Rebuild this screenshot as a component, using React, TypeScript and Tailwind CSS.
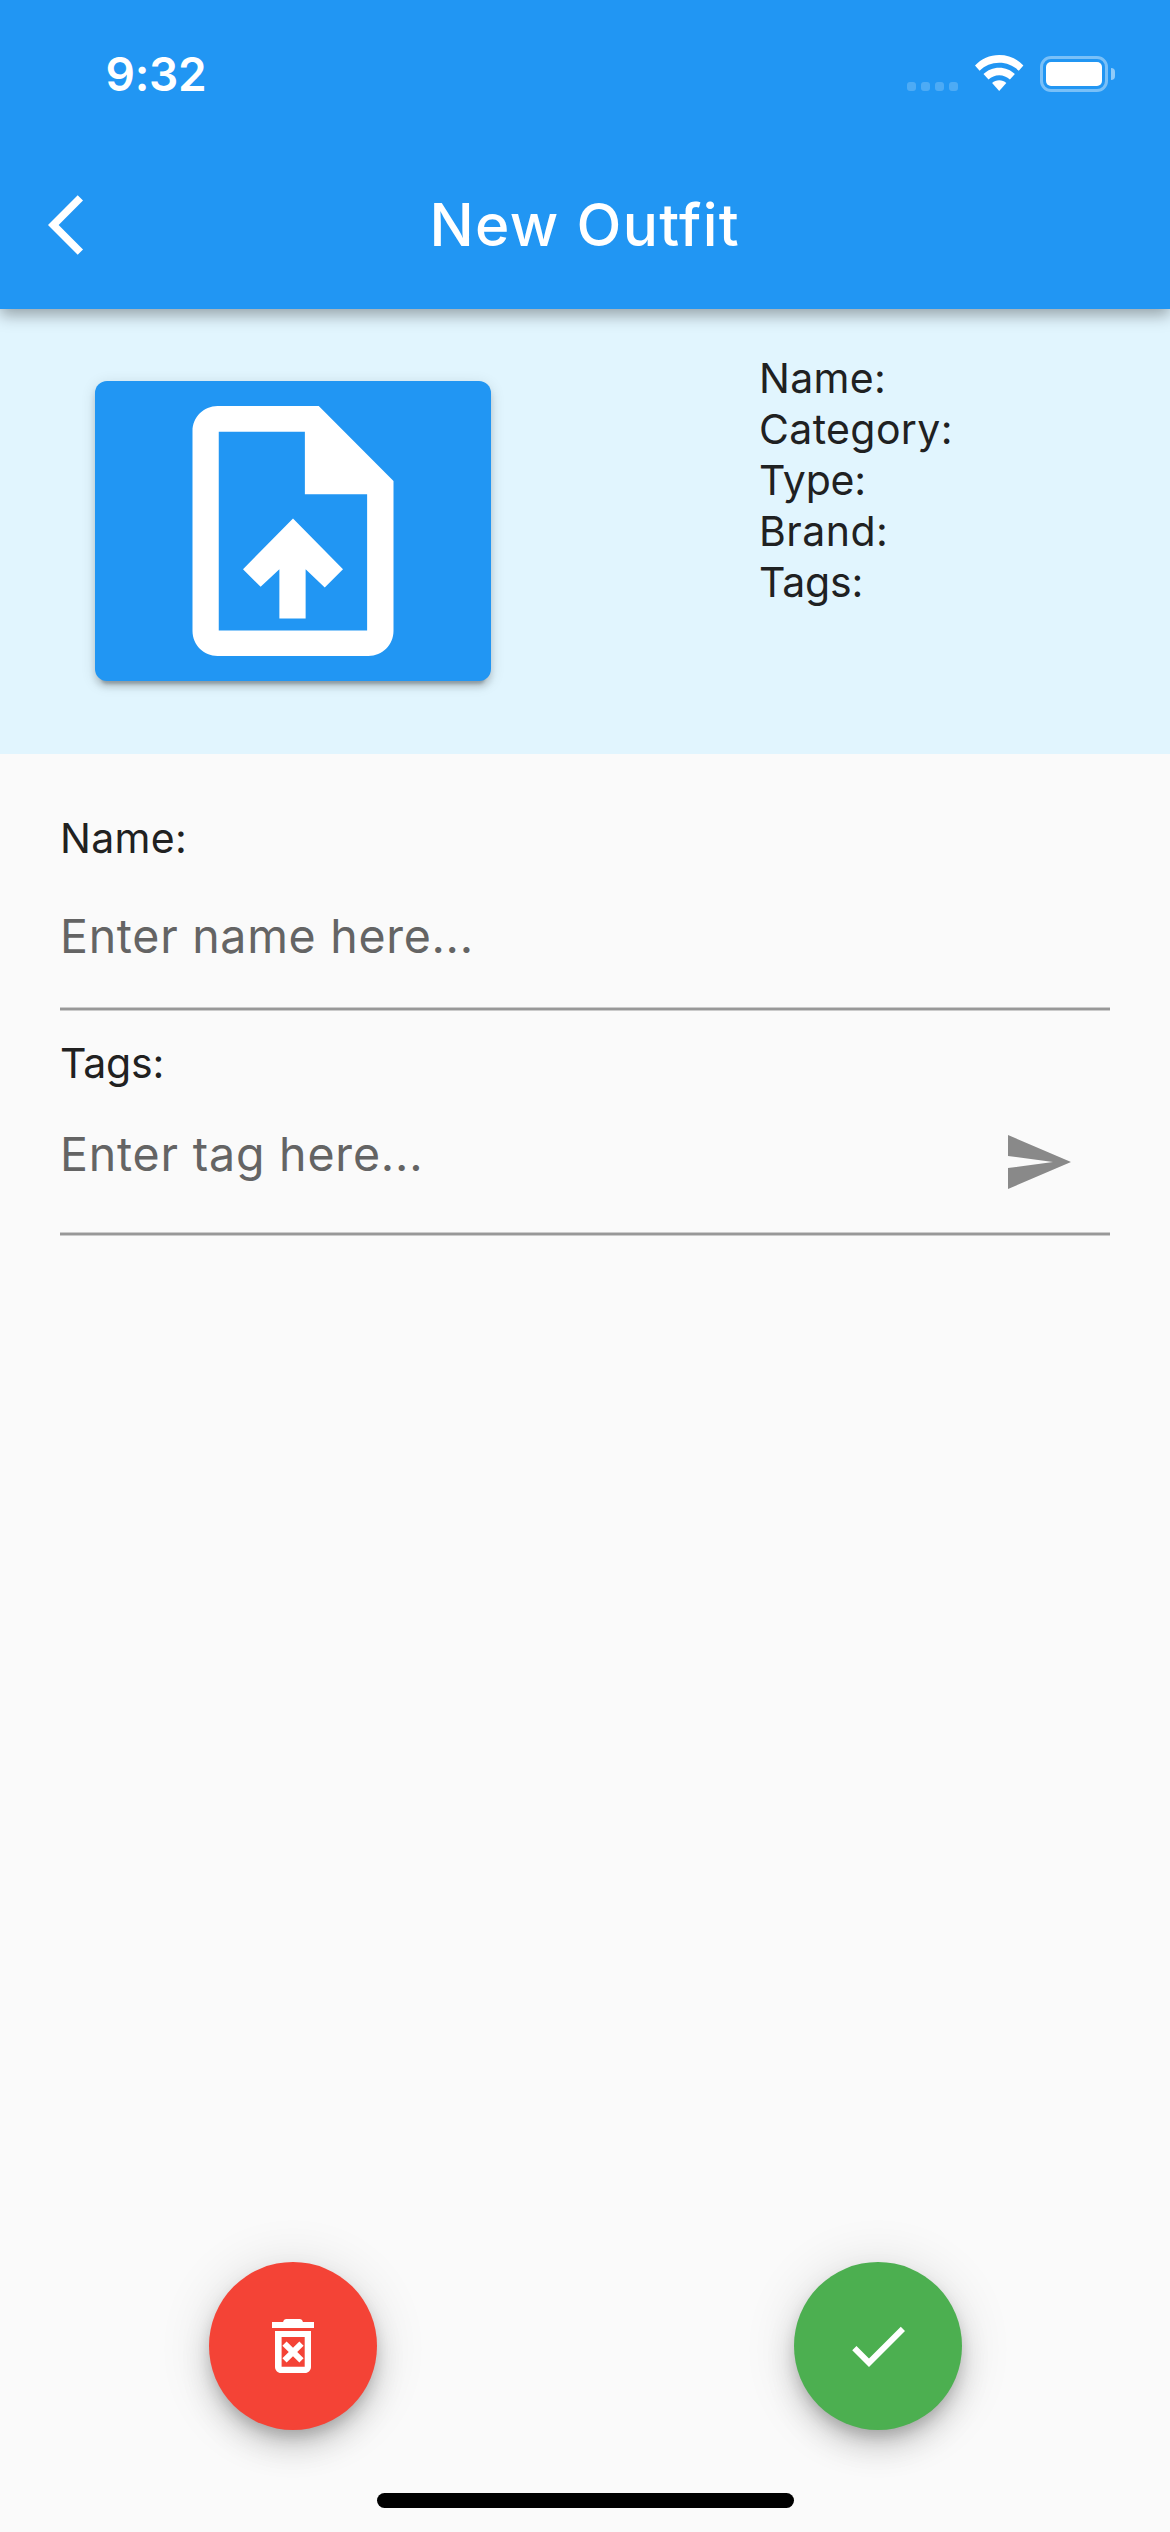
type ItemField = { label: string; spacing: string };

const itemFields: ItemField[] = [
  { label: 'Name:', spacing: 'tracking-[0.3px]' },
  { label: 'Category:', spacing: 'tracking-[0.37px]' },
  { label: 'Type:', spacing: 'tracking-[-0.16px]' },
  { label: 'Brand:', spacing: 'tracking-[0.48px]' },
  { label: 'Tags:', spacing: 'tracking-[-0.19px]' },
];

function StatusBar() {
  return (
    <div className="flex h-[141px] items-start justify-between pr-[55px] pl-[105.5px]">
      <span className="mt-[46px] text-[46px] leading-[56px] font-semibold tracking-[-0.25px]">9:32</span>
      <div className="mt-[55px] flex h-9">
        <div className="mt-[27px] flex gap-[5px]">
          {[0, 1, 2, 3].map((dot) => (
            <span key={dot} className="size-[9px] rounded-[3px] bg-white/20" />
          ))}
        </div>
        <svg className="ml-[17px] h-9 w-[49px]" viewBox="0 0 49 36" fill="white" aria-hidden="true">
          <path d="M24.2 0C33.6 0 42.2 3.7 48.4 10.6L43.8 15.8C38.6 10.7 31.8 7.8 24.2 7.8S9.8 10.7 4.6 15.8L0 10.6C6.2 3.7 14.8 0 24.2 0z" />
          <path d="M24.2 12.8c6.1 0 11.6 2.3 15.7 6.3l-5 5.4c-2.9-2.7-6.6-4.3-10.7-4.3s-7.8 1.6-10.7 4.3l-5-5.4c4.1-4 9.6-6.3 15.7-6.3z" />
          <path d="M24.2 25.2c2.7 0 5.2 1 7.1 2.8L24.2 36 17.1 28c1.9-1.8 4.4-2.8 7.1-2.8z" />
        </svg>
        <div className="mt-px ml-4 flex h-9 items-center">
          <div className="h-9 w-[68px] rounded-[11px] border-[3px] border-white/40 p-[3px]">
            <div className="size-full rounded-[5px] bg-white" />
          </div>
          <span className="ml-[3px] h-3 w-1 rounded-r-full bg-white/50" />
        </div>
      </div>
    </div>
  );
}

function AppBar() {
  return (
    <header className="relative z-10 h-[309px] bg-[#2196f3] text-white shadow-[0_6px_15px_rgba(0,0,0,0.34)]">
      <StatusBar />
      <div className="grid h-[168px] grid-cols-[429.5px_1fr] items-center">
        <svg className="ml-12 size-[72px]" viewBox="0 0 24 24" fill="currentColor" aria-hidden="true">
          <path d="M11.67 3.87L9.9 2.1 0 12l9.9 9.9 1.77-1.77L3.54 12z" />
        </svg>
        <h1 className="text-[58.5px] leading-[72px] font-medium tracking-[1.34px]">New Outfit</h1>
      </div>
    </header>
  );
}

function UploadButton() {
  return (
    <button
      type="button"
      aria-label="Upload picture"
      className="flex h-[300px] w-[396px] items-center justify-center rounded-xl bg-[#2196f3] shadow-[0_9px_3px_-6px_rgba(0,0,0,0.2),0_6px_6px_rgba(0,0,0,0.14),0_3px_15px_rgba(0,0,0,0.12)]"
    >
      <svg className="size-[300px]" viewBox="0 0 24 24" fill="white" aria-hidden="true">
        <path d="M14.06 2H5.96c-1.1 0-2 .9-2 2V20c0 1.1.9 2 2 2H18.04c1.1 0 2-.9 2-2V8zM17.93 19.96H6.06V4.05H12.95V9.06H17.93z" />
        <path d="M8 15.05l1.41 1.41 1.5-1.41V19h2.1V15.05l1.53 1.46L16 15.05 12 11z" />
      </svg>
    </button>
  );
}

function Summary() {
  return (
    <section className="grid h-[445px] grid-cols-[759px_1fr] bg-[#e1f5fe]">
      <div className="pt-[72.3px] pl-[94.5px]">
        <UploadButton />
      </div>
      <ul className="pt-11">
        {itemFields.map(({ label, spacing }) => (
          <li key={label} className={`text-[41px] leading-[51px] text-[#1f2122] ${spacing}`}>
            {label}
          </li>
        ))}
      </ul>
    </section>
  );
}

function Underline() {
  return <div className="h-1 border-y border-[#cbcbcb] bg-[#989898]" />;
}

function DetailsForm() {
  return (
    <section className="flex flex-col px-[60px] pt-[59px]">
      <span className="text-[41px] leading-[51px] tracking-[0.3px] text-[#212121]">Name:</span>
      <div className="h-[143px] pt-11">
        <span className="block text-[46.5px] leading-[56px] tracking-[0.71px] text-[#646464]">Enter name here...</span>
      </div>
      <Underline />
      <span className="mt-[27px] text-[41px] leading-[51px] tracking-[-0.19px] text-[#212121]">Tags:</span>
      <div className="flex h-[143px] items-start justify-between pt-[37px] pr-9">
        <span className="text-[46.5px] leading-[56px] tracking-[0.81px] text-[#646464]">Enter tag here...</span>
        <svg className="size-[72px]" viewBox="0 0 24 24" fill="#898989" aria-hidden="true">
          <path d="M2.01 21L23 12 2.01 3 2 10l15 2-15 2z" />
        </svg>
      </div>
      <Underline />
    </section>
  );
}

const fabShadow =
  'shadow-[0_9px_15px_-3px_rgba(0,0,0,0.2),0_18px_30px_rgba(0,0,0,0.14),0_3px_54px_rgba(0,0,0,0.12)]';

function Actions() {
  return (
    <footer className="mt-auto grid grid-cols-2 justify-items-center pb-[63px]">
      <button
        type="button"
        aria-label="Discard outfit"
        className={`flex size-[168px] items-center justify-center rounded-full bg-[#f44336] ${fabShadow}`}
      >
        <svg className="size-[72px]" viewBox="0 0 24 24" fill="white" aria-hidden="true">
          <path d="M14.12 10.47L12 12.59l-2.13-2.12-1.41 1.41L10.59 14l-2.12 2.12 1.41 1.41L12 15.41l2.12 2.12 1.41-1.41L13.41 14l2.12-2.12zM15.300 4Q15.100 3 14.200 3H9.800Q8.900 3 8.700 4H5v2h14V4zM6 19c0 1.100.9 2 2 2h8c1.100 0 2-.9 2-2V7H6v12zM8.200 9h7.700v9.900H8.200V9z" />
        </svg>
      </button>
      <button
        type="button"
        aria-label="Save outfit"
        className={`flex size-[168px] items-center justify-center rounded-full bg-[#4caf50] ${fabShadow}`}
      >
        <svg className="size-[72px]" viewBox="0 0 24 24" fill="white" aria-hidden="true">
          <path d="M9 16.17L4.83 12l-1.42 1.41L9 19 21 7l-1.41-1.41z" />
        </svg>
      </button>
    </footer>
  );
}

export default function App() {
  return (
    <div className="flex h-[2532px] w-[1170px] flex-col overflow-hidden bg-[#fafafa] font-['Inter',sans-serif]">
      <AppBar />
      <Summary />
      <DetailsForm />
      <Actions />
      <div className="mb-6 h-[15px] w-[417px] self-center rounded-full bg-black" />
    </div>
  );
}
